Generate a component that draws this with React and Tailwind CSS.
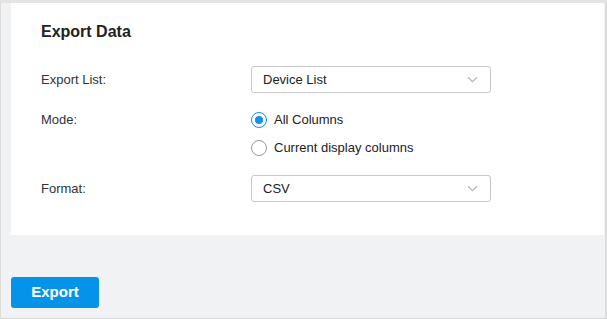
import { useState } from 'react';

function Chevron() {
  return (
    <svg width="11" height="7" viewBox="0 0 11 7" className="text-[#b8b8b8]">
      <path d="M1 1.2 L5.5 5.7 L10 1.2" fill="none" stroke="currentColor" strokeWidth="1.3" />
    </svg>
  );
}

function Select({ value }) {
  return (
    <div className="w-[240px] h-[27px] border border-[#c8c8c8] rounded-[3px] bg-white flex items-center justify-between pl-[11px] pr-[12px] text-[13px] text-[#222]">
      <span>{value}</span>
      <Chevron />
    </div>
  );
}

function Radio({ checked, label, onClick }) {
  return (
    <div className="flex items-center gap-[7px] h-[16px] cursor-pointer" onClick={onClick}>
      <span className={`w-[16px] h-[16px] rounded-full border flex items-center justify-center ${checked ? 'border-[#1a8fe6]' : 'border-[#999]'}`}>
        {checked && <span className="w-[8px] h-[8px] rounded-full bg-[#1a8fe6]" />}
      </span>
      <span className="text-[13px] text-[#222]">{label}</span>
    </div>
  );
}

export default function App() {
  const [mode, setMode] = useState('all');

  return (
    <div className="w-[607px] h-[319px] bg-[#f1f2f4] border-t-[3px] border-t-[#e4e4e4] border-l border-l-[#dcdcdc] border-r-[2px] border-r-[#dcdcdc] border-b border-b-[#d6d6d6] overflow-hidden" style={{ fontFamily: '"Liberation Sans", Arial, sans-serif' }}>
      <div className="ml-[10px] mr-[1px] h-[232px] bg-white pt-[19px] pl-[30px]">
        <h2 className="text-[16px] font-bold text-[#222] leading-[19px]">Export Data</h2>

        <div className="mt-[25px] flex flex-col">
          <div className="flex items-center h-[27px]">
            <span className="w-[210px] text-[13px] text-[#333]">Export List:</span>
            <Select value="Device List" />
          </div>

          <div className="flex mt-[19px]">
            <span className="w-[210px] text-[13px] text-[#333] leading-[16px]">Mode:</span>
            <div className="flex flex-col gap-[12px]">
              <Radio checked={mode === 'all'} label="All Columns" onClick={() => setMode('all')} />
              <Radio checked={mode === 'current'} label="Current display columns" onClick={() => setMode('current')} />
            </div>
          </div>

          <div className="flex items-center h-[27px] mt-[19px]">
            <span className="w-[210px] text-[13px] text-[#333]">Format:</span>
            <Select value="CSV" />
          </div>
        </div>
      </div>

      <div className="ml-[10px] mt-[42px]">
        <button className="w-[88px] h-[31px] rounded-[3px] bg-[#0593ea] text-white text-[15px] font-bold">Export</button>
      </div>
    </div>
  );
}
